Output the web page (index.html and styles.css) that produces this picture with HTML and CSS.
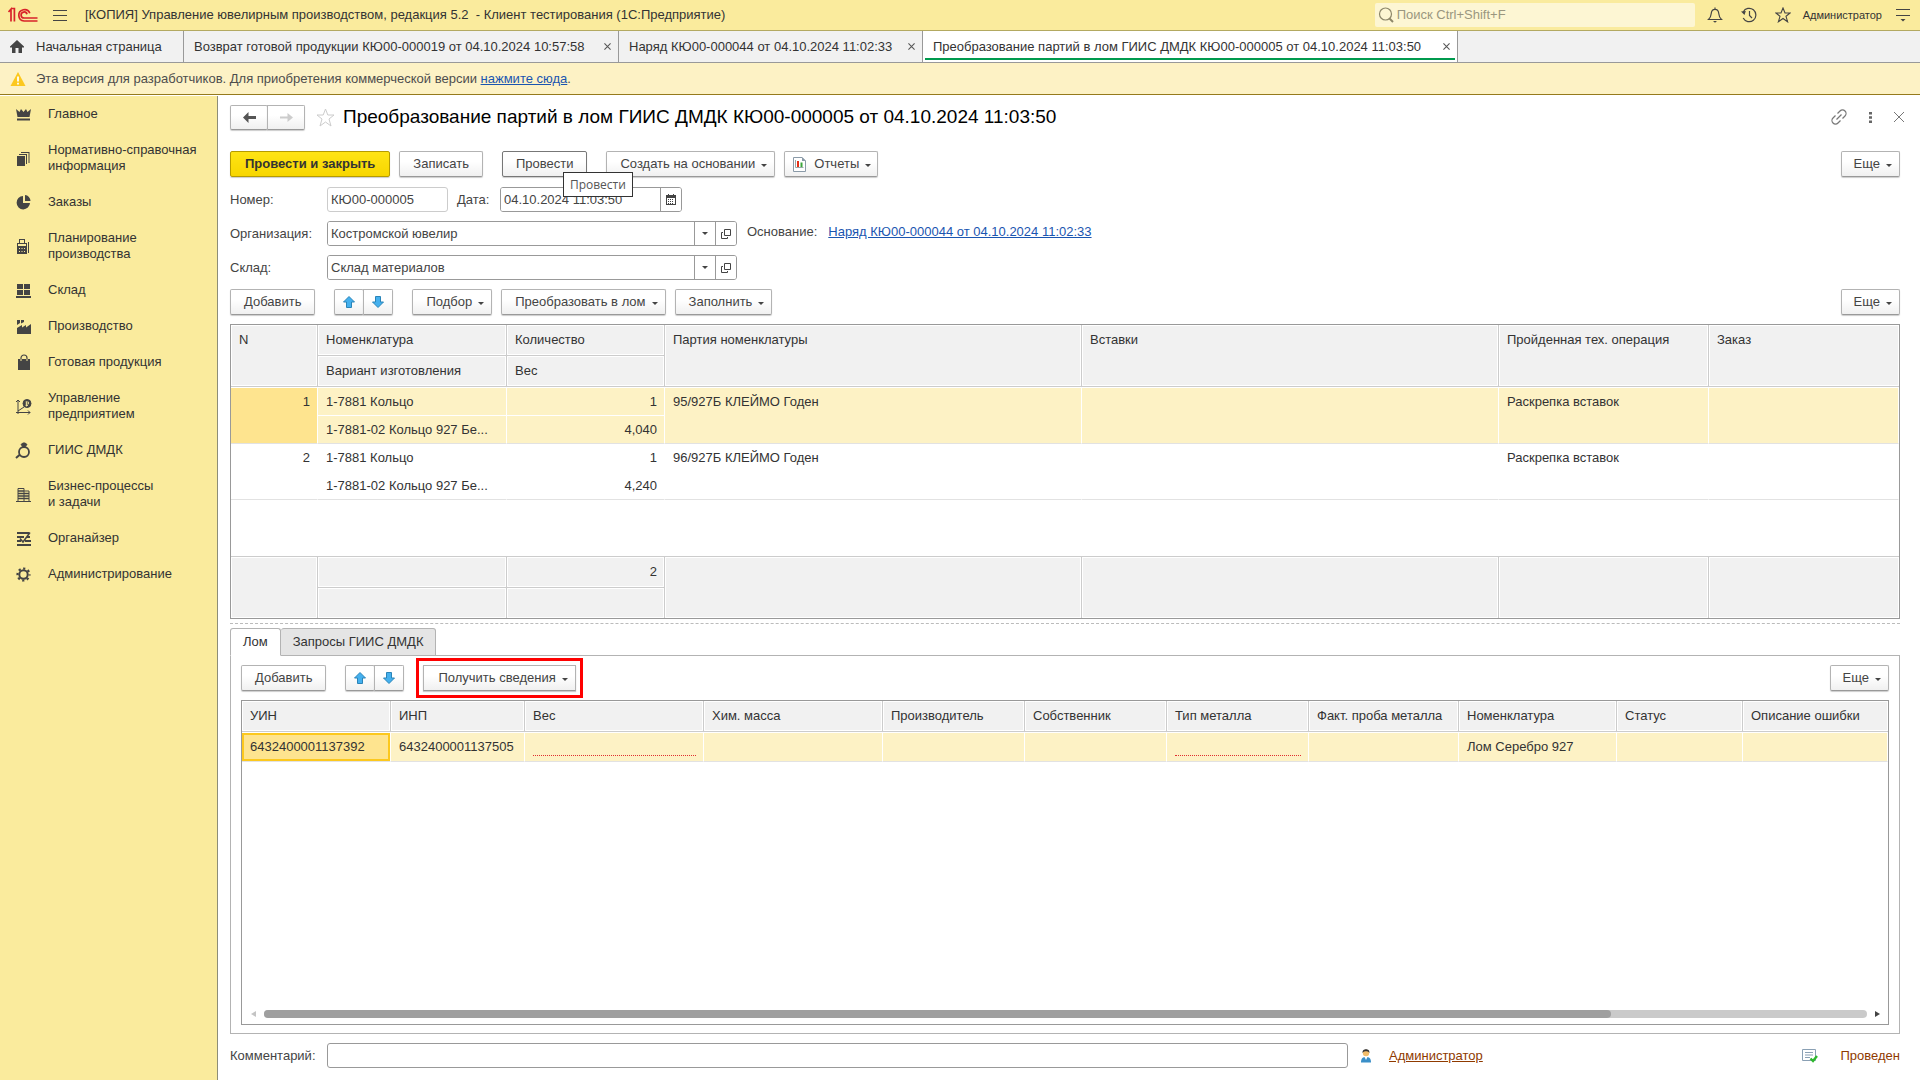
FILE: index.html
```html
<!DOCTYPE html>
<html lang="ru">
<head>
<meta charset="utf-8">
<title>Преобразование партий в лом ГИИС ДМДК</title>
<link rel="stylesheet" href="styles.css">
</head>
<body>
<header class="topbar">
  <svg class="logo" width="30" height="16" viewBox="0 0 30 16" fill="none" stroke="#d8232a" stroke-width="1.7"><path d="M0.5 5 3 2.2V14.5M3 1.5H6.4V14.5M3 14"/><path d="M21.8 6.2A5.7 5.7 0 1 0 16 14H29.5"/><path d="M19 7.2A3 3 0 1 0 16.2 11H29.5"/></svg>
  <button class="plain burger" aria-label="Меню"><svg width="14" height="13" viewBox="0 0 14 13" stroke="#444" stroke-width="1"><path d="M0 1.5H14M0 6.5H14M0 11.5H14"/></svg></button>
  <span class="app-title">[КОПИЯ] Управление ювелирным производством, редакция 5.2&nbsp; - Клиент тестирования&nbsp;(1С:Предприятие)</span>
  <label class="search">
    <svg width="16" height="16" viewBox="0 0 16 16" fill="none" stroke="#8d876a" stroke-width="1.2"><circle cx="7.5" cy="7" r="6"/><path d="M11.5 11.5 15 15" stroke-width="2"/></svg>
    <input type="search" placeholder="Поиск Ctrl+Shift+F" aria-label="Поиск">
  </label>
  <nav class="top-icons">
    <button class="plain" aria-label="Уведомления"><svg width="16" height="16" viewBox="0 0 16 16" fill="none" stroke="#444" stroke-width="1.2"><path d="M1.5 12.5C4 10.5 4 9 4.3 6 4.6 3.5 6 2.3 8 2.3S11.400 3.500 11.700 6C12 9 12 10.500 14.500 12.500ZM8 .5V2"/><path d="M6 14H10L8 15.800Z" fill="#444" stroke="none"/></svg></button>
    <button class="plain" aria-label="История"><svg width="16" height="16" viewBox="0 0 16 16" fill="none" stroke="#444" stroke-width="1.2"><path d="M2.200 5A6.700 6.700 0 1 1 2.200 11M8.500 4V8.500L11 11"/><path d="M0 4.500 4.800 4 3.500 8Z" fill="#444" stroke="none"/></svg></button>
    <button class="plain" aria-label="Избранное"><svg width="16" height="16" viewBox="0 0 16 16" fill="none" stroke="#444" stroke-width="1.1"><path d="M8 1 10 6H15.200L11 9.300 12.600 14.800 8 11.500 3.400 14.800 5 9.300 .8 6H6Z"/></svg></button>
    <a class="user" href="#">Администратор</a>
    <button class="plain" aria-label="Сервис"><svg width="14" height="14" viewBox="0 0 14 14" stroke="#444"><path d="M0 1.500H14M0 7.500H14"/><path d="M4.500 11H9.500L7 13.500Z" fill="#444" stroke="none"/></svg></button>
  </nav>
</header>

<nav class="tabs">
  <a class="tab home" href="#"><svg width="14" height="13" viewBox="0 0 14 13" fill="#444"><path d="M7 0 14 6.500V7.500H12V13H8.500V8H5.500V13H2V7.500H0V6.500Z"/></svg>Начальная страница</a>
  <a class="tab return" href="#">Возврат готовой продукции КЮ00-000019 от 04.10.2024 10:57:58<svg class="x" viewBox="0 0 8 8"><path d="M.5.500 7.500 7.500M7.500.500.500 7.500"/></svg></a>
  <a class="tab order" href="#">Наряд КЮ00-000044 от 04.10.2024 11:02:33<svg class="x" viewBox="0 0 8 8"><path d="M.5.500 7.500 7.500M7.500.500.500 7.500"/></svg></a>
  <a class="tab active" href="#">Преобразование партий в лом ГИИС ДМДК КЮ00-000005 от 04.10.2024 11:03:50<svg class="x" viewBox="0 0 8 8"><path d="M.5.500 7.500 7.500M7.500.500.500 7.500"/></svg></a>
</nav>

<div class="notice">
  <svg width="16" height="14" viewBox="0 0 16 14"><path d="M8 0 15.500 14H.5Z" fill="#fcc81e"/><path d="M8 4.500V9.500M8 10.800V12.600" stroke="#fff" stroke-width="1.800"/></svg>
  <p>Эта версия для разработчиков. Для приобретения коммерческой версии <a href="#">нажмите сюда</a>.</p>
</div>

<div class="workspace">
<nav class="sidebar">
  <a href="#"><svg viewBox="0 0 15 15"><path d="M0 2 3.500 5 5 2 7.500 5 10 2 11.500 5 15 2 13.500 10H1.500Z M1 11.500H14V13.500H1Z"/></svg><span>Главное</span></a>
  <a href="#"><svg viewBox="0 0 15 15"><path d="M1 5H9V15H1ZM3 3H11V13H10V4H3ZM5 1H13.500V12H12.500V2H5Z"/></svg><span>Нормативно-справочная<br>информация</span></a>
  <a href="#"><svg viewBox="0 0 15 15"><path d="M7 1V8H14A6.700 6.700 0 1 1 7 1ZM9 0A6 6 0 0 1 14.500 6H9Z"/></svg><span>Заказы</span></a>
  <a href="#"><svg viewBox="0 0 15 15"><path fill-rule="evenodd" d="M3 0H9V4H11V15H1V4H3ZM4 1V4H8V1ZM2 5V7H10V5ZM3 9V10H4V9ZM5.500 9V10H6.500V9ZM8 9V10H9V9ZM3 12V13H4V12ZM5.500 12V13H6.500V12ZM8 12V13H9V12ZM12 3H13V14H12Z"/></svg><span>Планирование<br>производства</span></a>
  <a href="#"><svg viewBox="0 0 15 15"><path d="M1 1H7V6H1ZM8 1H14V6H8ZM1 7H7V12H1ZM8 7H14V12H8ZM0 13H15V15H0Z"/></svg><span>Склад</span></a>
  <a href="#"><svg viewBox="0 0 15 15"><path d="M1 1H4V4L1 6ZM5 1H8V3L5 4.500ZM1 9 6 6V8.500L10 6V8.500L15 5V15H1Z"/></svg><span>Производство</span></a>
  <a href="#"><svg viewBox="0 0 15 15"><path d="M2 4H14V15H2Z"/><path d="M5 4V3A3 3 0 0 1 11 3V4" fill="none" stroke="#444" stroke-width="1.200"/><path d="M5 4V6M11 4V6" stroke="#faeb9d"/></svg><span>Готовая продукция</span></a>
  <a href="#"><svg viewBox="0 0 15 15" class="line"><path d="M2 15V1M0 3 2 1 4 3M0 13.500H14M12 11.500 14 13.500 12 15.500M2 12 8 8"/><circle cx="11" cy="4.500" r="4" fill="#444"/><path d="M9.500 3H12.500V5H9.500M9.500 6.500H12M10.500 2.500V7.500" stroke="#faeb9d" stroke-width=".8"/></svg><span>Управление<br>предприятием</span></a>
  <a href="#"><svg viewBox="0 0 15 15" class="line"><circle cx="8" cy="9" r="5" stroke-width="1.800"/><path d="M0 15 4 11.500" stroke-width="2"/><path d="M5 1.500 7 0H9L11 1.500 8 5Z" fill="#444"/></svg><span>ГИИС ДМДК</span></a>
  <a href="#"><svg viewBox="0 0 15 15" class="line"><path d="M2 14V1.500H8V14M8 4H13V14M0 14.500H15" /><path d="M2 4H8M2 6.500H13M2 9H13M2 11.500H13" stroke-width="1.300"/></svg><span>Бизнес-процессы<br>и задачи</span></a>
  <a href="#"><svg viewBox="0 0 15 15" class="line"><path d="M1 2H13M1 6H8M11 6H14M1 10H5M9 10H15M1 14H15" stroke-width="1.800"/><path d="M4 7.500 7 11 14 1.500" stroke-width="1.500"/></svg><span>Органайзер</span></a>
  <a href="#"><svg viewBox="0 0 15 15" class="line"><circle cx="7.500" cy="7.500" r="4.200" stroke-width="2"/><circle cx="7.500" cy="7.500" r="6" stroke-width="2.200" stroke-dasharray="2.200 2.512" stroke-dashoffset="1.100"/></svg><span>Администрирование</span></a>
</nav>

<main class="form">
  <div class="form-head">
    <div class="pair nav-pair">
      <button class="btn" aria-label="Назад"><svg width="13" height="11" viewBox="0 0 13 11"><path d="M5.500 0V4H13V7H5.500V11L0 5.500Z" fill="#555"/></svg></button>
      <button class="btn" aria-label="Вперед"><svg width="13" height="11" viewBox="0 0 13 11"><path d="M7.500 1V4.500H0V6.500H7.500V10L13 5.500Z" fill="#ccc"/></svg></button>
    </div>
    <svg class="fav" width="19" height="19" viewBox="0 0 19 19" fill="none" stroke="#ccc"><path d="M9.500 1 11.800 7H18L13 11 15 18 9.500 14 4 18 6 11 1 7H7.200Z"/></svg>
    <h1>Преобразование партий в лом ГИИС ДМДК КЮ00-000005 от 04.10.2024 11:03:50</h1>
    <div class="head-tools">
      <button class="plain" aria-label="Ссылка"><svg width="16" height="16" viewBox="0 0 16 16" fill="none" stroke="#777" stroke-width="1.200"><path d="M6.500 4.500 9 2A3.200 3.200 0 0 1 14 7L11.500 9.500M9.500 11.500 7 14A3.200 3.200 0 0 1 2 9L4.500 6.500M5.500 10.500 10.500 5.500"/></svg></button>
      <button class="plain" aria-label="Еще действия"><svg width="3" height="11" viewBox="0 0 3 11" fill="#666"><path d="M0 0H3V2.500H0ZM0 4.200H3V6.700H0ZM0 8.500H3V11H0Z"/></svg></button>
      <button class="plain" aria-label="Закрыть"><svg width="10" height="10" viewBox="0 0 10 10" stroke="#777"><path d="M0 0 10 10M10 0 0 10"/></svg></button>
    </div>
  </div>

  <div class="toolbar main-bar">
    <button class="btn primary">Провести и закрыть</button>
    <button class="btn">Записать</button>
    <div class="tip-host gap-wide"><button class="btn hovered">Провести</button><div class="tooltip" role="tooltip">Провести</div></div>
    <button class="btn drop gap-wide">Создать на основании</button>
    <button class="btn drop reports"><svg width="13" height="15" viewBox="0 0 13 15"><path d="M.5.500H9L12.500 4V14.500H.5Z" fill="#fff" stroke="#8a9aa8"/><path d="M9 0 13 4H9Z" fill="#8a9aa8"/><path d="M2.500 3V10.500H10.500" stroke="#9aa" fill="none"/><path d="M4 4H6V10H4Z" fill="#e33017"/><path d="M7.500 5.500H9.500V10H7.500Z" fill="#3ba53b"/></svg>Отчеты</button>
    <button class="btn drop more">Еще</button>
  </div>

  <div class="field-row">
    <label for="num">Номер:</label>
    <input id="num" class="inp number" value="КЮ00-000005">
    <label for="date" class="lbl-date">Дата:</label>
    <div class="group date"><input id="date" value="04.10.2024 11:03:50"><button aria-label="Календарь"><svg width="10" height="11" viewBox="0 0 10 11"><path fill="#444" fill-rule="evenodd" d="M0 1H2V0H3V1H7V0H8V1H10V11H0ZM1 4V10H9V4Z"/><path d="M2 5.500H8M2 7.500H8M2 9.500H8" stroke="#444" stroke-dasharray="1 1"/></svg></button></div>
  </div>
  <div class="field-row">
    <label for="org">Организация:</label>
    <div class="group ref"><input id="org" value="Костромской ювелир"><button class="dd" aria-label="Выбрать"></button><button aria-label="Открыть"><svg class="open" viewBox="0 0 10 10"><path d="M3.500.500H9.500V6.500H3.500ZM2 3.500H.5V9.500H6.500V8"/></svg></button></div>
    <div class="basis"><span>Основание:</span><a href="#">Наряд КЮ00-000044 от 04.10.2024 11:02:33</a></div>
  </div>
  <div class="field-row">
    <label for="store">Склад:</label>
    <div class="group ref"><input id="store" value="Склад материалов"><button class="dd" aria-label="Выбрать"></button><button aria-label="Открыть"><svg class="open" viewBox="0 0 10 10"><path d="M3.500.500H9.500V6.500H3.500ZM2 3.500H.5V9.500H6.500V8"/></svg></button></div>
  </div>

  <div class="toolbar">
    <button class="btn">Добавить</button>
    <div class="pair gap-wide">
      <button class="btn" aria-label="Вверх"><svg class="arr" viewBox="0 0 12 12"><path d="M6 .5 11.500 6H8.500V11.500H3.500V6H.5Z"/></svg></button>
      <button class="btn" aria-label="Вниз"><svg class="arr" viewBox="0 0 12 12"><path d="M6 11.500 11.500 6H8.500V.5H3.500V6H.5Z"/></svg></button>
    </div>
    <button class="btn drop gap-wide">Подбор</button>
    <button class="btn drop">Преобразовать в лом</button>
    <button class="btn drop">Заполнить</button>
    <button class="btn drop more">Еще</button>
  </div>

  <table class="grid parts">
    <colgroup><col class="w-n"><col class="w-item"><col class="w-qty"><col><col><col class="w-op"><col class="w-order"></colgroup>
    <thead>
      <tr><th rowspan="2">N</th><th>Номенклатура</th><th>Количество</th><th rowspan="2">Партия номенклатуры</th><th rowspan="2">Вставки</th><th rowspan="2">Пройденная тех. операция</th><th rowspan="2">Заказ</th></tr>
      <tr><th>Вариант изготовления</th><th>Вес</th></tr>
    </thead>
    <tbody>
      <tr class="sel"><td rowspan="2" class="num cur">1</td><td>1-7881 Кольцо</td><td class="num">1</td><td rowspan="2">95/927Б КЛЕЙМО Годен</td><td rowspan="2"></td><td rowspan="2">Раскрепка вставок</td><td rowspan="2"></td></tr>
      <tr class="sel second"><td>1-7881-02 Кольцо 927 Бе...</td><td class="num">4,040</td></tr>
      <tr><td rowspan="2" class="num">2</td><td>1-7881 Кольцо</td><td class="num">1</td><td rowspan="2">96/927Б КЛЕЙМО Годен</td><td rowspan="2"></td><td rowspan="2">Раскрепка вставок</td><td rowspan="2"></td></tr>
      <tr class="second"><td>1-7881-02 Кольцо 927 Бе...</td><td class="num">4,240</td></tr>
      <tr class="blank"><td colspan="7"></td></tr>
    </tbody>
    <tfoot>
      <tr><td rowspan="2"></td><td></td><td class="num">2</td><td rowspan="2"></td><td rowspan="2"></td><td rowspan="2"></td><td rowspan="2"></td></tr>
      <tr><td></td><td></td></tr>
    </tfoot>
  </table>

  <div class="splitter"></div>

  <div class="page-tabs" role="tablist">
    <button role="tab" aria-selected="true">Лом</button><button role="tab" aria-selected="false">Запросы ГИИС ДМДК</button>
  </div>
  <section class="page">
    <div class="toolbar">
      <button class="btn">Добавить</button>
      <div class="pair gap-wide">
        <button class="btn" aria-label="Вверх"><svg class="arr" viewBox="0 0 12 12"><path d="M6 .5 11.500 6H8.500V11.500H3.500V6H.5Z"/></svg></button>
        <button class="btn" aria-label="Вниз"><svg class="arr" viewBox="0 0 12 12"><path d="M6 11.500 11.500 6H8.500V.5H3.500V6H.5Z"/></svg></button>
      </div>
      <button class="btn drop gap-wide marked">Получить сведения</button>
      <button class="btn drop more">Еще</button>
    </div>
    <div class="scrap-box">
      <table class="grid scrap">
        <colgroup><col class="w-uin"><col class="w-inp"><col class="w-weight"><col class="w-weight"><col class="w-own"><col class="w-own"><col class="w-own"><col class="w-probe"><col class="w-nom"><col class="w-status"><col></colgroup>
        <thead><tr><th>УИН</th><th>ИНП</th><th>Вес</th><th>Хим. масса</th><th>Производитель</th><th>Собственник</th><th>Тип металла</th><th>Факт. проба металла</th><th>Номенклатура</th><th>Статус</th><th>Описание ошибки</th></tr></thead>
        <tbody><tr class="sel"><td class="cur framed">6432400001137392</td><td>6432400001137505</td><td><span class="required"></span></td><td></td><td></td><td></td><td><span class="required"></span></td><td></td><td>Лом Серебро 927</td><td></td><td></td></tr></tbody>
      </table>
      <div class="hscroll">
        <svg width="5" height="6" viewBox="0 0 5 6"><path d="M5 0V6L0 3Z" fill="#c4c4c4"/></svg>
        <div class="track"><div class="thumb"></div></div>
        <svg width="5" height="6" viewBox="0 0 5 6"><path d="M0 0V6L5 3Z" fill="#444"/></svg>
      </div>
    </div>
  </section>

  <footer class="bottom">
    <label for="comment">Комментарий:</label>
    <input id="comment" class="inp comment">
    <div class="side">
      <svg width="12" height="14" viewBox="0 0 12 14"><path d="M1 13.500C1 9 3 8 6 8S11 9 11 13.500Z" fill="#3a8fc8"/><path d="M4.500 8H7.500L6 11Z" fill="#fff"/><circle cx="6" cy="4" r="3.200" fill="#f2bd6b"/><path d="M2.500 4C2.500 1 4 .3 6 .3S9.500 1 9.500 4C8.500 2.500 7 2.300 6 2.300S3.500 2.500 2.500 4Z" fill="#333"/></svg>
      <a href="#">Администратор</a>
      <svg class="state-icon" width="16" height="14" viewBox="0 0 16 14" fill="none"><path d="M.5.500H13.500V11.500H.5Z" stroke="#8aa0b4"/><path d="M3 3.500H11M3 6H11M3 8.500H8" stroke="#8aa0b4"/><path d="M8.500 9.500 11 12 15 7" stroke="#2eb82e" stroke-width="2.400"/></svg>
      <span class="state">Проведен</span>
    </div>
  </footer>
</main>
</div>
</body>
</html>
```
FILE: styles.css
```css
* { box-sizing: border-box; }
body {
  margin: 0;
  min-height: 100vh;
  display: flex;
  flex-direction: column;
  background: #fff;
  color: #333;
  font: 13px/16px "Liberation Sans", Arial, sans-serif;
}
svg { flex: none; display: block; }
button, input { font: inherit; color: #444; }
button { padding: 0; }
p { margin: 0; }
a { color: inherit; text-decoration: none; }

.plain { border: 0; background: none; display: flex; }

.topbar {
  height: 31px;
  display: flex;
  align-items: center;
  padding: 0 10px 0 8px;
  background: #faeb9d;
  border-bottom: 1px solid #b3a961;
}
.burger { margin: 0 18px 0 15px; }
.search {
  display: flex;
  align-items: center;
  gap: 3px;
  width: 320px;
  height: 24px;
  margin-left: auto;
  padding-left: 3px;
  background: #fdf6d3;
  border-radius: 2px;
}
.search input {
  flex: 1;
  min-width: 0;
  border: 0;
  padding: 0;
  background: none;
  outline: 0;
}
.search input::placeholder { color: #9a967f; }
.top-icons {
  display: flex;
  align-items: center;
  gap: 18px;
  margin-left: 12px;
}
.user { font-size: 11px; margin: 0 -4px 0 -6px; }

.tabs {
  display: flex;
  height: 32px;
  background: #f1f1f1;
  border-bottom: 1px solid #999;
}
.tab {
  display: flex;
  align-items: center;
  padding: 0 7px 0 10px;
  border-right: 1px solid #999;
}
.tab.home { width: 184px; gap: 12px; }
.tab.return { width: 435px; }
.tab.order { width: 304px; }
.tab.active {
  width: 535px;
  position: relative;
  background: #fff;
}
.tab.active::after {
  content: "";
  position: absolute;
  left: 2px;
  right: 2px;
  bottom: 2px;
  height: 2px;
  background: #009a4e;
}
.x { width: 7px; height: 7px; margin-left: auto; stroke: #555; stroke-width: 1.2; }

.notice {
  display: flex;
  align-items: center;
  gap: 10px;
  height: 32px;
  padding-left: 10px;
  background: #fdf2c5;
  border-bottom: 1px solid #957a1c;
  color: #4d4d4d;
}
.notice a, .basis a { color: #1a55b0; text-decoration: underline; }

.workspace {
  flex: 1;
  display: flex;
  padding-top: 1px;
}
.sidebar {
  width: 218px;
  flex: none;
  background: #faeb9d;
  border-right: 1px solid #8d8d77;
}
.sidebar a {
  display: flex;
  align-items: center;
  gap: 17px;
  padding: 10px 0 10px 16px;
}
.sidebar svg { width: 15px; height: 15px; fill: #444; overflow: visible; }
.sidebar .line { fill: none; stroke: #444; }

.form {
  flex: 1;
  min-width: 0;
  display: flex;
  flex-direction: column;
  padding: 9px 20px 12px 12px;
}
.form-head {
  display: flex;
  align-items: center;
  height: 24px;
  margin-bottom: 22px;
}
.form-head h1 {
  margin: 0;
  font-size: 19px;
  font-weight: 400;
  line-height: 24px;
  color: #000;
}
.fav { margin: 0 8px 0 11px; }
.head-tools {
  display: flex;
  align-items: center;
  gap: 22px;
  margin: 0 -4px 0 auto;
}

.btn {
  display: inline-flex;
  align-items: center;
  justify-content: center;
  height: 26px;
  padding: 0 13px;
  white-space: nowrap;
  background: linear-gradient(#fff 40%, #f0f0f0);
  border: 1px solid #b3b3b3;
  border-bottom-color: #999;
  border-radius: 2px;
  box-shadow: 0 1px 1px #ccc;
}
.btn.primary {
  padding: 0 14px;
  font-weight: 700;
  color: #333;
  background: linear-gradient(#ffe414, #f7d600);
  border-color: #b59b00;
}
.btn.hovered { border-color: #777; }
.btn.drop { padding: 0 7px 0 13px; }
.btn.drop::after {
  content: "";
  margin: 3px 0 0 6px;
  border: 3px solid transparent;
  border-top-color: #444;
  border-bottom: 0;
}
.btn.reports { gap: 8px; padding: 0 6px 0 8px; }
.btn.reports::after { margin-left: -2px; }
.pair { display: flex; }
.pair .btn { width: 30px; padding: 0; }
.pair .btn + .btn { margin-left: -1px; border-radius: 0 2px 2px 0; }
.nav-pair .btn { width: 38px; height: 25px; }
.arr { width: 12px; height: 12px; fill: #44b0ee; stroke: #2a84b8; }

.toolbar { display: flex; gap: 9px; }
.gap-wide { margin-left: 10px; }
.toolbar .more { margin-left: auto; padding: 0 7px 0 12px; }
.main-bar { margin-bottom: 10px; }
.tip-host { position: relative; display: flex; }
.tooltip {
  position: absolute;
  left: 61px;
  top: 21px;
  z-index: 1;
  height: 25px;
  padding: 4px 6px;
  font: 12px/16px "Open Sans", "Noto Sans", sans-serif;
  color: #555;
  background: #fff;
  border: 1px solid #333;
}

.field-row {
  display: flex;
  align-items: center;
  height: 25px;
  margin-bottom: 9px;
  color: #444;
}
.field-row > label:first-child, .bottom > label { width: 97px; flex: none; }
.inp, .group {
  height: 25px;
  border: 1px solid #999;
  border-radius: 3px;
  background: #fff;
}
.inp { padding: 0 3px; }
.number { width: 121px; border-color: #ccc; }
.field-row .lbl-date { width: 43px; margin-left: 9px; }
.group { display: flex; overflow: hidden; }
.group input {
  flex: 1;
  min-width: 0;
  border: 0;
  padding: 0 3px;
  outline: 0;
}
.group button {
  width: 21px;
  display: flex;
  align-items: center;
  justify-content: center;
  border: 0;
  border-left: 1px solid #999;
  background: #fff;
}
.date { width: 182px; }
.ref { width: 410px; }
.dd::after {
  content: "";
  border: 3px solid transparent;
  border-top-color: #444;
  border-bottom: 0;
}
.open { width: 10px; height: 10px; fill: none; stroke: #444; }
.basis {
  display: flex;
  gap: 11px;
  align-self: flex-start;
  padding-top: 3px;
  margin-left: 10px;
}

.grid {
  width: 100%;
  table-layout: fixed;
  border-collapse: separate;
  border-spacing: 0;
}
.grid th, .grid td {
  padding: 0 7px 0 8px;
  text-align: left;
  vertical-align: top;
  font-weight: 400;
  white-space: nowrap;
  overflow: hidden;
  line-height: 27px;
  height: 28px;
}
.grid th, .grid tfoot td {
  height: 31px;
  line-height: 29px;
  background: #f1f1f1;
  border-right: 1px solid #ccc;
  border-bottom: 1px solid #ccc;
  box-shadow: inset 0 0 0 1px #fff;
}
.grid tr:first-child th:last-child, .grid tfoot tr:first-child td:last-child { border-right: 0; }
.grid .num { text-align: right; }
.grid tbody td { border-right: 1px solid #fff; }
.grid .sel td { background: #fdf2c5; }
.grid .sel .cur { background: #fee48f; }
.parts {
  margin-top: 9px;
  border: 1px solid #999;
}
.parts tbody tr:first-child td { border-top: 1px solid #fff; }
.parts .sel:first-child td:not([rowspan]) { border-bottom: 1px solid #fff; }
.parts tbody td[rowspan], .parts tbody .second td { border-bottom: 1px solid #e2e2e2; }
.parts tbody .blank td { height: 56px; border: 0; }
.parts tfoot tr:first-child td { border-top: 1px solid #ccc; height: 32px; }
.parts tfoot tr:last-child td { height: 30px; }
.parts tfoot tr:last-child td, .parts tfoot tr:first-child td[rowspan] { border-bottom: 0; }
.w-n { width: 87px; }
.w-item { width: 189px; }
.w-qty { width: 158px; }
.w-op { width: 210px; }
.w-order { width: 190px; }

.splitter { height: 9px; padding-top: 4px; }
.splitter::after { content: ""; display: block; border-top: 1px dashed #bbb; }

.page-tabs { display: flex; margin-bottom: -1px; z-index: 1; }
.page-tabs button {
  height: 28px;
  padding: 0 12px;
  color: #333;
  background: #e5e5e5;
  border: 1px solid #b3b3b3;
  border-radius: 3px 3px 0 0;
}
.page-tabs button + button { border-left: 0; }
.page-tabs [aria-selected="true"] { background: #fff; border-bottom-color: #fff; }
.page {
  flex: 1;
  display: flex;
  flex-direction: column;
  padding: 9px 10px 8px;
  border: 1px solid #b3b3b3;
}
.btn.marked {
  padding: 0 7px 0 14px;
  border-radius: 0;
  outline: 3px solid #f00;
  outline-offset: 4px;
}
.scrap-box {
  flex: 1;
  display: flex;
  flex-direction: column;
  margin-top: 9px;
  border: 1px solid #999;
}
.scrap tbody td {
  height: 30px;
  line-height: 27px;
  border-top: 1px solid #fff;
  border-bottom: 1px solid #e2e2e2;
}
.scrap .framed { box-shadow: inset 0 0 0 2px #fcc81e; }
.required {
  display: block;
  height: 23px;
  border-bottom: 1px dotted #e03030;
}
.w-uin { width: 149px; }
.w-inp { width: 134px; }
.w-weight { width: 179px; }
.w-own { width: 142px; }
.w-probe { width: 150px; }
.w-nom { width: 158px; }
.w-status { width: 126px; }

.hscroll {
  display: flex;
  align-items: center;
  gap: 8px;
  margin-top: auto;
  padding: 0 8px 6px 9px;
}
.track { flex: 1; height: 8px; border-radius: 4px; background: #cacaca; }
.thumb { width: 84%; height: 8px; border-radius: 4px; background: #9f9f9f; }

.bottom {
  display: flex;
  align-items: center;
  margin-top: 9px;
  color: #444;
}
.comment { flex: 1; min-width: 0; }
.side {
  display: flex;
  align-items: center;
  width: 552px;
  padding-left: 12px;
  color: #8f3a00;
}
.side a { margin-left: 17px; text-decoration: underline; }
.state-icon { margin-left: auto; }
.state { margin-left: 22px; }
```
